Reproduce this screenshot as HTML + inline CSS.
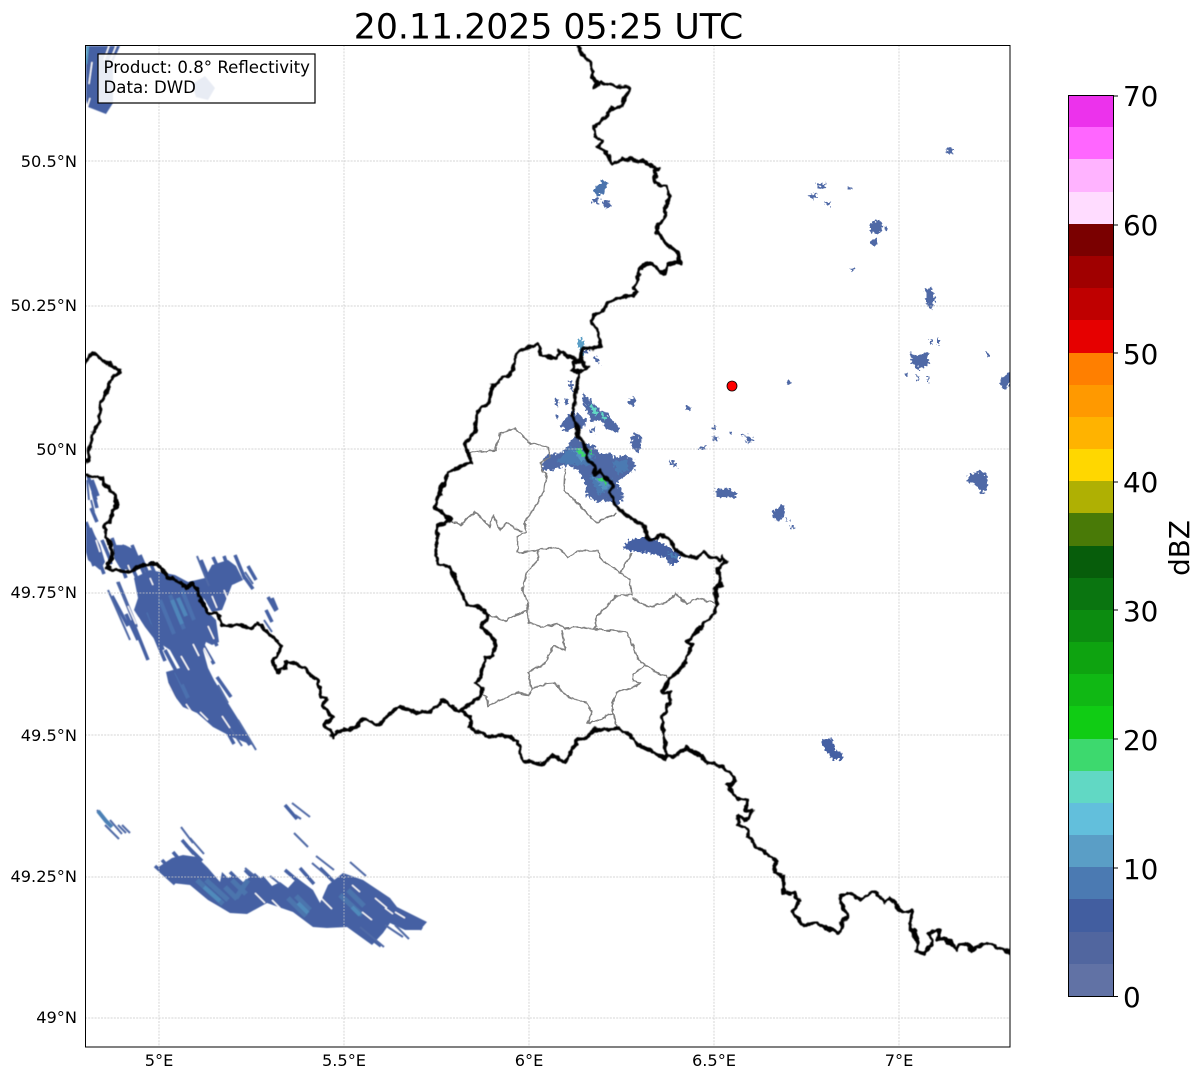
<!DOCTYPE html>
<html><head><meta charset="utf-8"><style>
html,body{margin:0;padding:0;background:#fff;width:1202px;height:1081px;overflow:hidden}
svg{display:block}
text{font-family:"DejaVu Sans","Liberation Sans",sans-serif;fill:#000}
.tk{font-size:16.2px}
.cb{font-size:27.8px}
.g{stroke:#c6c6c6;stroke-width:.7;stroke-dasharray:2 1.2;fill:none}
.b{fill:none;stroke:#000;stroke-width:3.5;stroke-linejoin:round;stroke-linecap:round}
.c{fill:none;stroke:#808080;stroke-width:1.6;stroke-linejoin:round}
.s1{fill:none;stroke:#4560a3;stroke-width:3.5}
.s2{fill:none;stroke:#4f69a6;stroke-width:2}
.w{fill:none;stroke:#fff;stroke-width:1.4}
.l{fill:none;stroke:#4b74ad;stroke-width:4}
</style></head><body>
<svg width="1202" height="1081" viewBox="0 0 1202 1081" xmlns="http://www.w3.org/2000/svg">
<defs>
<clipPath id="ax"><rect x="85" y="45" width="925" height="1002"/></clipPath>
<filter id="wig" x="-5%" y="-5%" width="110%" height="110%" color-interpolation-filters="sRGB"><feTurbulence type="fractalNoise" baseFrequency=".14" numOctaves="2" seed="4" result="n"/><feDisplacementMap in="SourceGraphic" in2="n" scale="6" xChannelSelector="R" yChannelSelector="G"/><feGaussianBlur stdDeviation=".4"/></filter>
<filter id="wig2" x="-5%" y="-5%" width="110%" height="110%" color-interpolation-filters="sRGB"><feTurbulence type="fractalNoise" baseFrequency=".18" numOctaves="2" seed="9" result="n"/><feDisplacementMap in="SourceGraphic" in2="n" scale="4" xChannelSelector="R" yChannelSelector="G"/><feGaussianBlur stdDeviation=".3"/></filter>
<filter id="jag" x="-5%" y="-5%" width="110%" height="110%" color-interpolation-filters="sRGB"><feTurbulence type="fractalNoise" baseFrequency=".4" numOctaves="1" seed="2" result="n"/><feDisplacementMap in="SourceGraphic" in2="n" scale="8" xChannelSelector="R" yChannelSelector="G"/><feGaussianBlur stdDeviation=".35"/></filter>
<filter id="soft" x="-2%" y="-2%" width="104%" height="104%"><feGaussianBlur stdDeviation=".45"/></filter>
</defs>
<rect width="1202" height="1081" fill="#fff"/>
<text x="548.5" y="38.5" text-anchor="middle" style="font-size:34.7px">20.11.2025 05:25 UTC</text>

<g clip-path="url(#ax)">
<g filter="url(#soft)">
<!-- corner echo -->
<path d="M86 46H120L113 62L113 103L106 114L88 107L86 100Z" fill="#4560a3"/>
<path d="M88 46l-2 18" stroke="#5a9ec6" stroke-width="2.5" fill="none"/>
<path class="w" d="M109 46l-5 14M116 46l-6 15M92 62l-3 22M90 98l-3 10"/>
<path d="M192 84L205 76L215 88L208 100L196 97Z" fill="#4560a3"/>

<!-- left cluster -->
<path d="M86 525L92 530L100 545L105 562L100 570L88 560L86 552Z" fill="#4560a3"/>
<path d="M113 545L125 545L135 550L142 565L135 572L120 568L114 558Z" fill="#4560a3"/>
<path d="M134 578L150 570L175 575L190 583L200 590L208 612L216 620L219 642L212 645L206 642L203 650L208 668L214 680L228 703L245 730L252 745L232 737L213 727L197 713L183 707L170 690L166 672L180 668L170 650L155 640L145 627L134 610L138 598Z" fill="#4560a3"/>
<path d="M188 582L205 578L212 565L228 560L236 566L243 580L232 585L226 600L222 610L212 612L205 600Z" fill="#4560a3"/>
<g class="l" style="stroke:#4b6fae">
<path d="M160 600l14 34M170 595l14 34M182 590l12 30M148 612l10 24M176 672l12 26"/>
</g>
<path d="M172 600l10 24M178 598l8 18" stroke="#4f86ba" stroke-width="4" fill="none"/>
<path class="s1" d="M88 476l8 24M92 480l6 16M93 492l4 16M91 508l6 14M86 522l12 32M90 528l12 30M102 540l10 24M88 550l6 16M96 552l8 22M112 538l14 40M122 545l18 40M132 545l16 38M140 555l12 28M150 562l10 24M156 572l8 20M118 582l18 44M112 596l16 30M126 614l12 26M132 620l16 40M145 600l18 50M150 625l15 36M176 640l14 34M200 640l14 24M205 620l12 26M165 650l18 34M210 700l24 44M225 710l16 28M217 677l14 20M236 725l14 20M201 560l10 24M213 557l12 26M224 556l10 28M235 555l10 24M248 566l8 14M243 575l10 14M268 597l8 14M272 598l5 12M266 610l6 12"/>
<path class="s2" d="M197 556l12 30M108 590l22 50M117 582l20 45M218 685l10 18M238 720l18 30M230 728l12 18M87 480l2 20M91 500l3 12M264 620l8 12M245 572l8 12"/>
<path class="w" d="M181 656l8 14M204 648l7 13M193 644l6 12M150 640l5 10M128 606l8 18M138 618l4 12M208 626l6 13M168 684l7 14M186 704l7 10M200 712l8 8M222 716l8 12M112 560l4 8M96 540l4 12M128 565l3 8M212 596l5 12M224 590l4 10M150 578l3 7"/>

<!-- bottom cluster -->
<path d="M157 868L172 858L183 855L197 857L208 868L220 882L222 872L228 878L235 875L243 882L255 873L270 887L280 882L288 888L297 878L313 890L320 903L328 885L343 873L363 880L390 898L397 907L427 922L420 930L405 930L390 923L383 933L372 945L347 927L327 928L313 927L293 912L267 903L247 914L230 913L220 907L208 900L190 885L172 883Z" fill="#4560a3"/>
<g class="l" style="stroke-width:5">
<path d="M197 880l26 24M206 880l22 20M225 887l12 12M232 880l14 14M288 898l18 18M296 896l14 14M340 895l22 20M348 890l16 16M248 880l-12 18"/>
</g>
<path d="M204 887l16 14M298 903l10 10M352 907l8 8" stroke="#4f8abb" stroke-width="4" fill="none"/>
<path class="s1" d="M182 840l12 14M186 845l16 16M178 857l12 14M173 852l10 12M155 866l20 18M162 860l18 20M285 805l12 14M230 872l12 12M245 870l14 14M262 877l12 14M285 870l14 12M300 868l14 16M320 868l14 14M380 912l18 10M400 915l22 14M363 932l18 14"/>
<path class="s2" d="M181 827l12 16M190 838l14 16M97 810l14 16M110 820l12 14M122 825l8 8M118 825l8 8M105 825l14 14M292 803l18 14M295 815l6 4M294 833l14 14M316 856l18 14M312 863l14 12M350 862l16 14M245 868l12 10M270 876l10 8M395 925l14 14M385 925l18 12M360 927l24 20"/>
<path d="M98 811l8 10l6 6" stroke="#4b80b5" stroke-width="4" fill="none"/>
<path class="w" d="M320 897l12 12M255 893l10 10M375 898l12 10M362 912l10 8M395 912l10 6M272 900l8 8M352 885l8 7M385 908l8 6"/>
</g>

<!-- central echoes + scatter -->
<g filter="url(#jag)">
<path d="M541 463L548 455L563 452L568 445L575 436L583 443L593 445L600 453L610 453L617 458L623 455L634 459L635 470L623 477L617 483L621 490L624 497L617 506L608 500L597 503L586 495L585 483L577 470L567 465L553 470L543 470Z" fill="#4f69a6"/>
<path d="M556 462L570 447L585 450L595 455L590 465L575 465ZM590 476L612 478L612 490L598 495ZM612 462L628 460L628 470L618 474Z" fill="#4b7ab2"/>
<path d="M572 450L582 462L592 458L586 452ZM592 476L610 486L604 490Z" fill="#5a9ec6" opacity=".7"/>
<path d="M576 450L583 458L586 455L580 448ZM586 450L594 456L592 452ZM596 478L607 484L606 479Z" fill="#3dd96e"/>
<path d="M583 393L590 400L600 410L607 413L612 420L619 428L617 433L608 430L600 420L592 422L587 410L583 403Z" fill="#4f69a6"/>
<path d="M590 402L598 412L596 416L590 408ZM602 412L606 420L605 421L600 414Z" fill="#61d8c4"/>
<path d="M560 425L567 418L572 410L580 415L587 420L583 428L573 428L566 432ZM590 428L596 427L594 433L589 432ZM555 398L559 400L558 406L555 405ZM569 380L572 381L573 392L570 390ZM565 398L569 400L568 405L565 404ZM556 415L558 415L558 419L556 419Z" fill="#4f69a6"/>
<path d="M578 342L582 336L585 347L582 358L580 350Z" fill="#5a9ec6"/>
<path d="M582 350L590 348L588 353L584 354ZM594 356L598 358L600 364L596 362Z" fill="#4f69a6"/>
<path d="M627 402L634 397L636 403L631 406ZM631 436L637 433L642 438L640 450L637 453L632 446Z" fill="#4f69a6"/>
<path d="M623 547L630 540L643 537L657 540L670 548L680 553L678 563L670 565L665 558L650 553L637 552L627 550Z" fill="#4560a3"/>
<path d="M668 552L678 556L677 559L670 557Z" fill="#4b80b5"/>
<path d="M667 560l4 -3l3 5l-4 3Z" fill="#4f69a6"/>
<g fill="#4f69a6">
<path d="M945 150L951 147L954 151L949 155Z"/>
<path d="M593 190L602 180L608 183L604 193L597 196Z" fill="#4b74ad"/>
<path d="M591 200L598 197L599 204L592 203ZM602 200L610 202L612 207L604 208Z"/>
<path d="M817 183L826 184L825 188L818 187ZM810 195L817 193L817 198L811 198ZM824 201L830 203L829 206L825 205ZM848 187L853 189L849 190Z"/>
<path d="M870 223L880 220L883 228L878 234L870 232ZM884 226L889 229L886 231ZM870 242L876 238L878 244L873 247ZM851 268L854 269L853 272L850 271Z"/>
<path d="M925 290L932 288L935 300L932 310L927 306Z"/>
<path d="M909 352L916 356L928 352L929 364L918 370L912 362ZM905 373h3v4h-3ZM917 375h2v6h-2ZM927 376h2v6h-2ZM930 338h2v6h-2ZM937 339h2v5h-2ZM987 352h2v5h-2Z"/>
<path d="M1002 377L1010 372V385L1003 390L1000 383ZM786 382l4 -1v3l-3 1Z"/>
<path d="M968 476L980 470L988 476L987 490L981 494L977 485L968 483Z"/>
<path d="M772 512L782 504L786 512L780 521L774 519ZM790 525l5 3l-3 1ZM786 518l3 3l-3 1Z"/>
<path d="M715 490L727 488L737 493L735 498L722 497L715 497Z"/>
<path d="M820 740L832 738L836 750L843 753L842 760L833 759L825 750Z" fill="#4560a3"/>
<path d="M668 460L674 462L677 467L670 465ZM700 446h5v4h-5ZM686 406l4 1v4l-4 -1ZM615 427l3 1v3h-3ZM713 425l3 1l-1 4l-2 -1ZM712 436l6 1l-2 5l-3 -3ZM730 431l2 1v3h-2ZM745 435l6 2l3 4l-7 2ZM741 433l3 2l-3 1Z"/>
</g>
</g>

<!-- gridlines -->
<g class="g">
<path d="M159 45V1047M344 45V1047M529 45V1047M714 45V1047M899 45V1047"/>
<path d="M85 161H1010M85 306H1010M85 449H1010M85 593H1010M85 735H1010M85 877H1010M85 1018H1010"/>
</g>

<!-- canton lines -->
<g class="c" filter="url(#wig2)">
<path d="M465 452L482 452L495 450L500 437L500 433L515 428L530 443L548 447L550 457L540 463L543 472L547 473L544 490L535 507L525 522L526 532L518 537L518 553"/>
<path d="M450 520L460 525L475 512L490 527L493 515L500 530L507 523L522 532"/>
<path d="M565 468L564 490L597 523L617 513"/>
<path d="M518 553L538 550L553 547L560 549L568 558L578 551L598 551L603 562L615 568L620 573L632 553"/>
<path d="M538 550L538 560L527 572L525 580L522 588L528 603L527 610L529 623L543 627L558 624L565 628L577 627L593 629L607 630L627 632L640 662L645 665L657 673L668 677"/>
<path d="M488 615L505 621L527 610"/>
<path d="M620 573L630 580L632 595L617 595L603 610L596 617L596 627L592 629"/>
<path d="M632 598L648 607L668 602L675 593L687 604L697 598L715 603"/>
<path d="M645 665L633 675L633 680L640 683L637 686L617 693L612 703L613 713L617 728"/>
<path d="M613 713L590 723L588 722L592 713L587 703L570 698L562 692L556 683L545 684L532 689L528 673L545 663L553 646L565 650L562 630"/>
<path d="M532 689L528 695L517 693L493 703L488 707L487 697L482 695"/>
</g>

<!-- borders -->
<g class="b" filter="url(#wig)">
<path d="M578 46L583 55L590 62L593 72L592 77L596 83L595 88L600 83L610 84L618 87L628 87L629 92L622 102L620 107L612 109L603 120L594 128L596 137L603 142L599 147L606 152L612 164L622 159L625 161L630 158L638 162L643 161L653 167L659 168L654 172L656 183L667 187L669 197L665 208L666 215L660 223L656 231L665 242L678 253L680 262L668 265L663 273L651 263L643 265L639 272L635 287L637 290L633 297L625 296L607 303L603 312L593 315L591 322L597 330L598 337L601 345L593 348L583 348L581 355L580 362L587 367L580 372L572 370L575 362L580 362M579 373L577 387L575 400L574 410L572 415L577 425L578 437L585 445L587 457L592 462L595 475L600 470L605 477L613 485L610 493L617 507L630 518L643 525L648 538L652 540L660 535L667 537L678 552L688 557L697 557L703 552L713 558L720 560L723 557L726 562L718 568L721 585L715 590L717 605L715 613L702 625L687 642L692 645L683 667L668 680L662 693L670 692L670 703L662 718L666 757"/>
<path d="M580 362L574 358L558 351L557 359L542 355L537 345L518 351L512 372L493 385L488 403L477 413L475 430L465 443L471 462L460 467L448 473L434 507L451 519L438 527L436 553L438 565L450 567L467 605L480 607L488 615L482 628L495 640L493 656L485 657L480 678L475 683L483 688L482 695L462 710L472 720L470 727L488 737L498 735L510 737L518 742L522 760L543 765L552 755L565 762L577 740L587 738L593 730L618 729L630 735L638 745L665 758"/>
<path d="M86 475L102 478L105 485L115 495L116 505L108 523L105 527L105 538L112 545L112 557L106 567L112 570L130 572L142 565L157 564L168 577L187 587L193 583L207 612L213 613L217 612L222 625L237 625L250 628L258 623L282 647L273 662L277 672L285 668L287 661L305 668L318 682L321 697L327 698L323 707L332 717L325 725L333 737L338 731L355 728L363 719L378 725L392 712L400 706L412 712L430 712L442 700L460 712L463 708"/>
<path d="M85 363L92 353L105 362L120 370L112 378L105 395L100 405L100 420L92 435L88 460L85 462"/>
<path d="M665 757L677 755L686 748L700 755L708 763L715 763L730 773L736 781L728 785L732 793L738 798L747 800L746 809L752 811L747 820L738 817L738 823L748 830L748 837L757 847L765 852L772 858L777 860L774 873L783 877L784 893L795 893L799 902L793 912L803 925L817 923L838 933L842 930L842 920L848 917L839 898L847 893L860 899L872 892L877 893L885 903L890 899L903 912L912 910L910 923L917 942L917 952L923 953L932 945L929 932L940 930L937 940L945 938L957 950L960 945L968 944L973 952L975 947L988 944L1003 949L1012 953"/>
</g>

<circle cx="732" cy="386" r="5" fill="#f00" stroke="#000" stroke-width=".8"/>
</g>

<rect x="85.5" y="45.5" width="924.5" height="1001.5" fill="none" stroke="#000" stroke-width="1"/>

<!-- legend -->
<rect x="98" y="54" width="217" height="49" fill="#fff" fill-opacity=".88" stroke="#000" stroke-width="1.2"/>
<text x="103.5" y="73" style="font-size:16.6px">Product: 0.8° Reflectivity</text>
<text x="103.5" y="93" style="font-size:16.6px">Data: DWD</text>

<!-- lat labels -->
<g class="tk" text-anchor="end">
<text x="77" y="167">50.5°N</text>
<text x="77" y="311">50.25°N</text>
<text x="77" y="455">50°N</text>
<text x="77" y="598">49.75°N</text>
<text x="77" y="741">49.5°N</text>
<text x="77" y="882">49.25°N</text>
<text x="77" y="1023">49°N</text>
</g>
<g class="tk" text-anchor="middle">
<text x="159" y="1066">5°E</text>
<text x="344" y="1066">5.5°E</text>
<text x="529" y="1066">6°E</text>
<text x="714" y="1066">6.5°E</text>
<text x="899" y="1066">7°E</text>
</g>

<!-- colorbar -->
<g shape-rendering="crispEdges">
<rect x="1068" y="96" width="45" height="32" fill="#ec32ec"/>
<rect x="1068" y="127" width="45" height="33" fill="#ff66ff"/>
<rect x="1068" y="159" width="45" height="33" fill="#ffb3ff"/>
<rect x="1068" y="192" width="45" height="32" fill="#ffdcff"/>
<rect x="1068" y="224" width="45" height="32" fill="#7a0000"/>
<rect x="1068" y="256" width="45" height="32" fill="#a00000"/>
<rect x="1068" y="288" width="45" height="32" fill="#bf0000"/>
<rect x="1068" y="320" width="45" height="33" fill="#e60000"/>
<rect x="1068" y="353" width="45" height="32" fill="#ff7f00"/>
<rect x="1068" y="385" width="45" height="32" fill="#ff9900"/>
<rect x="1068" y="417" width="45" height="32" fill="#ffb300"/>
<rect x="1068" y="449" width="45" height="32" fill="#ffd700"/>
<rect x="1068" y="481" width="45" height="32" fill="#afb003"/>
<rect x="1068" y="513" width="45" height="33" fill="#497a07"/>
<rect x="1068" y="546" width="45" height="32" fill="#075d0b"/>
<rect x="1068" y="578" width="45" height="32" fill="#0a7510"/>
<rect x="1068" y="610" width="45" height="32" fill="#0c8c10"/>
<rect x="1068" y="642" width="45" height="32" fill="#0ea310"/>
<rect x="1068" y="674" width="45" height="33" fill="#10b814"/>
<rect x="1068" y="706" width="45" height="33" fill="#10cc14"/>
<rect x="1068" y="739" width="45" height="32" fill="#3dd96e"/>
<rect x="1068" y="771" width="45" height="32" fill="#61d8c4"/>
<rect x="1068" y="803" width="45" height="32" fill="#62bfdc"/>
<rect x="1068" y="835" width="45" height="32" fill="#5a9ec6"/>
<rect x="1068" y="867" width="45" height="32" fill="#4b7ab2"/>
<rect x="1068" y="899" width="45" height="33" fill="#425ea0"/>
<rect x="1068" y="932" width="45" height="32" fill="#51669f"/>
<rect x="1068" y="964" width="45" height="33" fill="#6172a5"/>
</g>
<rect x="1068.5" y="95.5" width="45" height="901" fill="none" stroke="#000" stroke-width="1"/>
<path d="M1113 96h5M1113 225h5M1113 353h5M1113 482h5M1113 610h5M1113 739h5M1113 868h5M1113 996.5h5" stroke="#000" stroke-width="1"/>
<g class="cb">
<text x="1123" y="106">70</text>
<text x="1123" y="235">60</text>
<text x="1123" y="364">50</text>
<text x="1123" y="492">40</text>
<text x="1123" y="621">30</text>
<text x="1123" y="750">20</text>
<text x="1123" y="879">10</text>
<text x="1123" y="1007">0</text>
</g>
<text transform="translate(1189,548) rotate(-90)" text-anchor="middle" class="cb">dBZ</text>
</svg>
</body></html>
